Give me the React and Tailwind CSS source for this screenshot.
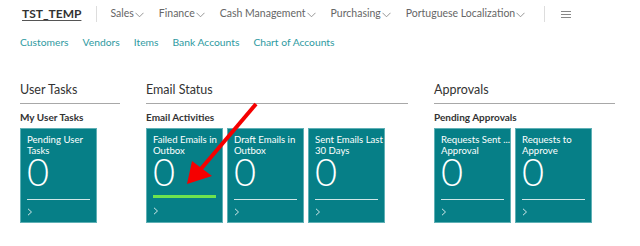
import React from "react";

const menu = ["Sales", "Finance", "Cash Management", "Purchasing", "Portuguese Localization"];
const links = ["Customers", "Vendors", "Items", "Bank Accounts", "Chart of Accounts"];

function Chevron() {
  return (
    <svg width="9" height="6" viewBox="0 0 9 6" className="ml-[1px] mt-[2px]">
      <path d="M0.5 0.8 L4.5 4.8 L8.5 0.8" fill="none" stroke="#8a8a8a" strokeWidth="0.9" />
    </svg>
  );
}

function Tile({ lines, highlight }) {
  return (
    <div className="w-[77px] h-[95px] bg-[#067f87] border border-[#5fb0b5] flex flex-col px-[6px] pt-[5px] text-white">
      <div className="text-[9.6px] leading-[11px] h-[22px] whitespace-nowrap">
        {lines.map((l) => (
          <div key={l}>{l}</div>
        ))}
      </div>
      <div className="text-[38px] leading-[30px] font-light h-[30px]">0</div>
      {highlight ? (
        <div className="h-[3px] bg-[#6ee34e] mt-[9px]" />
      ) : (
        <div className="h-px bg-[#cfe6e7] mt-[13px]" />
      )}
      <svg width="6" height="8" viewBox="0 0 6 8" className={highlight ? "mt-[9px]" : "mt-[8px]"}>
        <path d="M1 0.8 L4.5 4 L1 7.2" fill="none" stroke="#cfe6e7" strokeWidth="1" />
      </svg>
    </div>
  );
}

function Section({ title, sub, width, children }) {
  return (
    <div style={{ width }}>
      <div className="text-[12.5px] text-[#333] h-[16px] leading-[16px]">{title}</div>
      <div className="h-px bg-[#a8a8a8] mt-[5px]" />
      <div className="text-[10px] font-bold text-[#333] mt-[7px] leading-[12px]">{sub}</div>
      <div className="flex gap-[4px] mt-[5px]">{children}</div>
    </div>
  );
}

export default function App() {
  return (
    <div className="relative w-[640px] h-[246px] bg-white overflow-hidden font-['Lato',sans-serif]">
      <div className="flex items-center h-[28px] pl-[22px]">
        <span className="text-[12px] font-bold text-[#333] underline underline-offset-2 decoration-[#555]">TST_TEMP</span>
        <div className="w-px h-[16px] bg-[#ddd] ml-[15px] mr-[13px]" />
        <div className="flex gap-[15px] text-[10.5px] text-[#666]">
          {menu.map((m) => (
            <span key={m} className="flex items-center">
              {m}
              <Chevron />
            </span>
          ))}
        </div>
        <div className="w-px h-[16px] bg-[#ddd] ml-[19px] mr-[16px]" />
        <div className="flex flex-col gap-[2px]">
          <div className="w-[10px] h-px bg-[#888]" />
          <div className="w-[10px] h-px bg-[#888]" />
          <div className="w-[10px] h-px bg-[#888]" />
        </div>
      </div>
      <div className="flex gap-[14px] pl-[20px] mt-[7px] text-[10.3px] text-[#2e9aa1] leading-[14px]">
        {links.map((l) => (
          <span key={l}>{l}</span>
        ))}
      </div>
      <div className="flex gap-[26px] pl-[20px] mt-[33px]">
        <Section title="User Tasks" sub="My User Tasks" width={100}>
          <Tile lines={["Pending User", "Tasks"]} />
        </Section>
        <Section title="Email Status" sub="Email Activities" width={262}>
          <Tile lines={["Failed Emails in", "Outbox"]} highlight />
          <Tile lines={["Draft Emails in", "Outbox"]} />
          <Tile lines={["Sent Emails Last", "30 Days"]} />
        </Section>
        <Section title="Approvals" sub="Pending Approvals" width={181}>
          <Tile lines={["Requests Sent ...", "Approval"]} />
          <Tile lines={["Requests to", "Approve"]} />
        </Section>
      </div>
      <svg className="absolute left-0 top-0" width="640" height="246" viewBox="0 0 640 246">
        <line x1="256" y1="104" x2="200" y2="170" stroke="#f50000" strokeWidth="4" />
        <polygon points="187,184 192,161 212,176" fill="#f50000" />
      </svg>
    </div>
  );
}
